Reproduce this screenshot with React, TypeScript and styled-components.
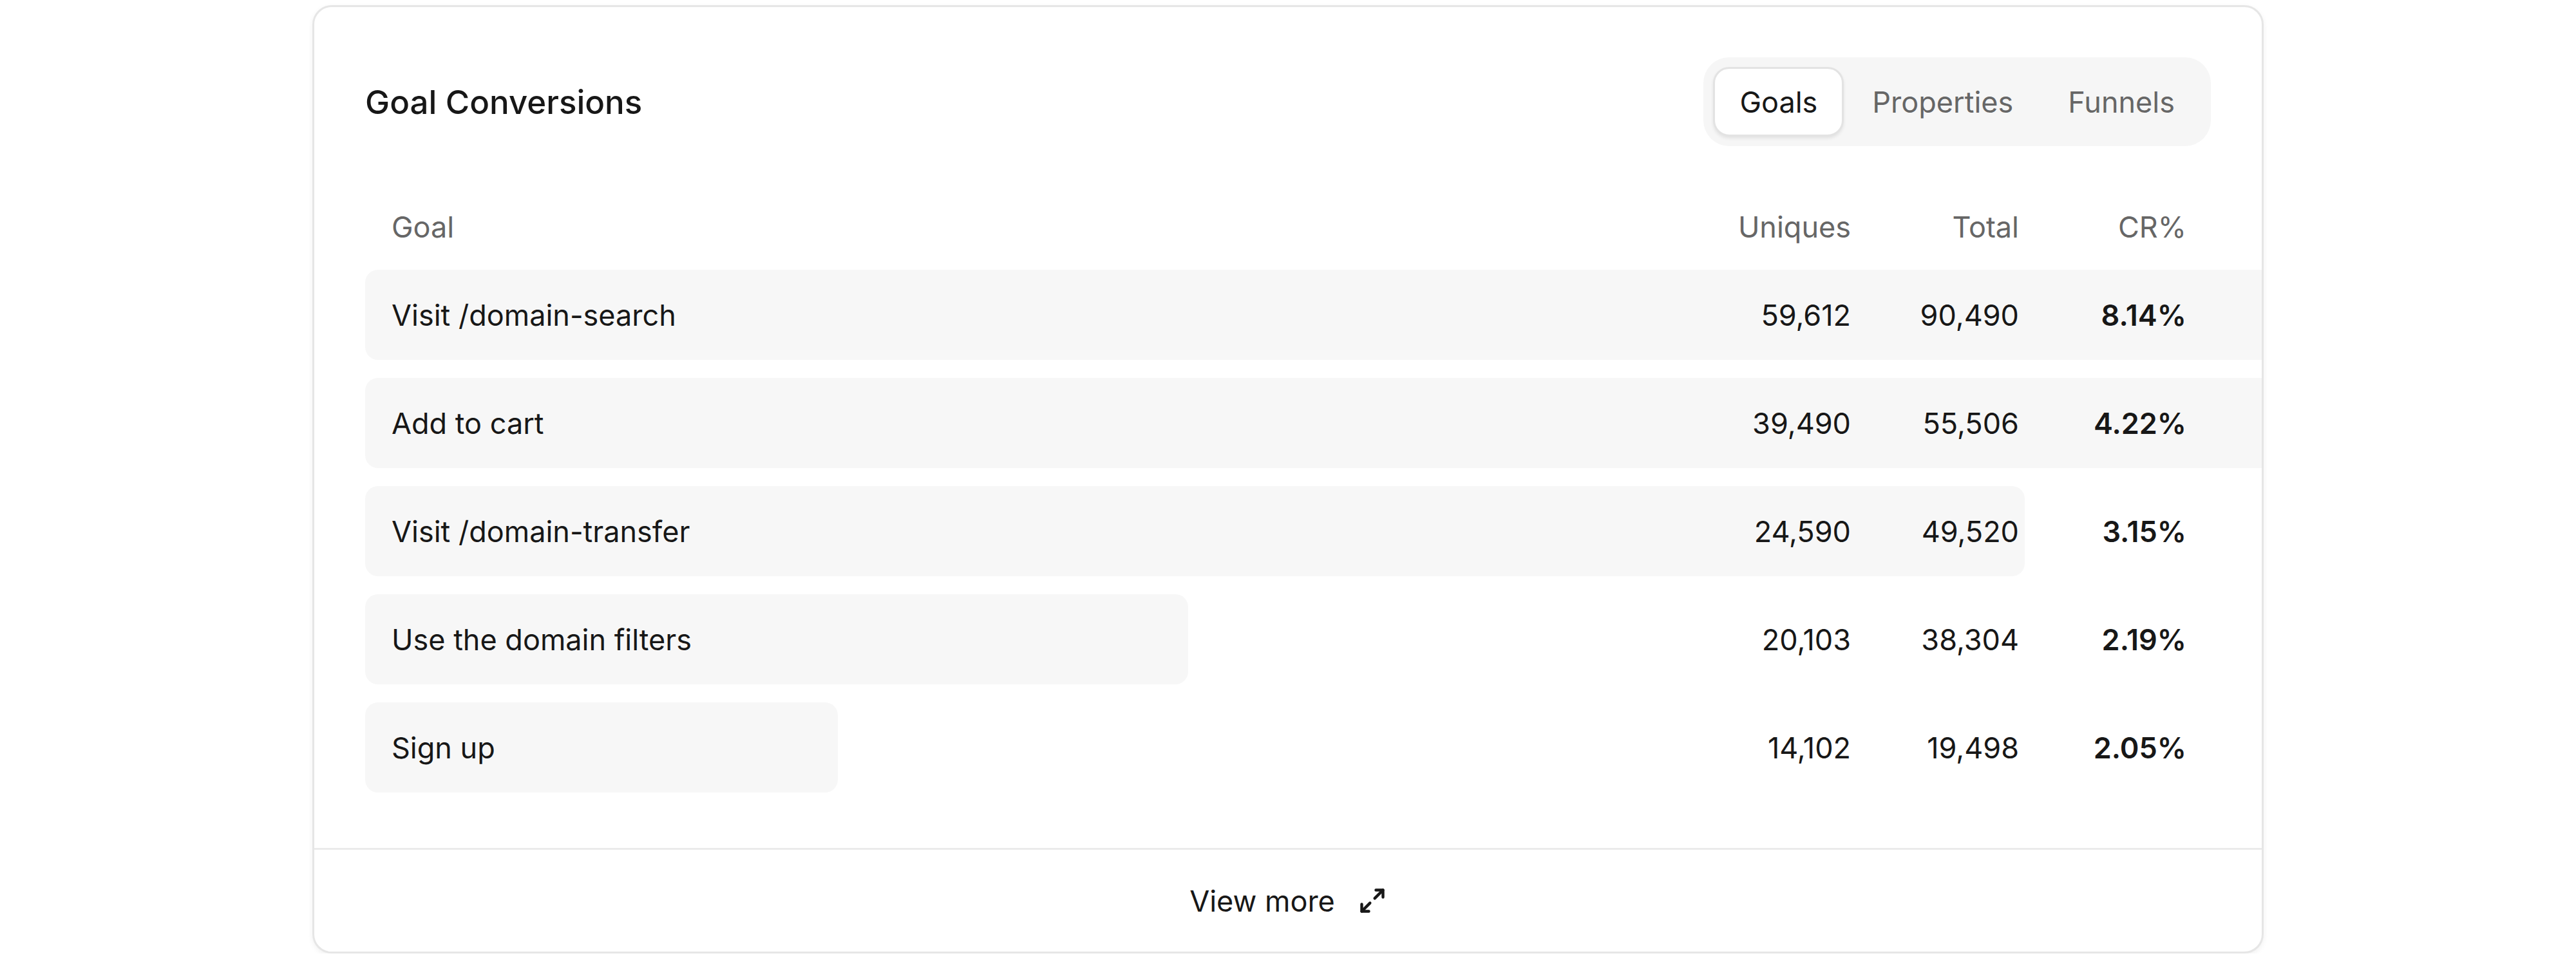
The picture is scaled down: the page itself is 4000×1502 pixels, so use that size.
import React, { FunctionComponent, useState } from 'react';
import styled, { createGlobalStyle } from 'styled-components';
import { Maximize2 } from 'lucide-react';

const goals = [
  { name: 'Visit /domain-search', uniques: '59,612', total: '90,490', cr: '8.14%', bar: 110 },
  { name: 'Add to cart', uniques: '39,490', total: '55,506', cr: '4.22%', bar: 105 },
  { name: 'Visit /domain-transfer', uniques: '24,590', total: '49,520', cr: '3.15%', bar: 89.9 },
  { name: 'Use the domain filters', uniques: '20,103', total: '38,304', cr: '2.19%', bar: 44.6 },
  { name: 'Sign up', uniques: '14,102', total: '19,498', cr: '2.05%', bar: 25.6 },
];

const tabs = ['Goals', 'Properties', 'Funnels'];

const GlobalStyle = createGlobalStyle`
  body {
    margin: 0;
    background: #ffffff;
    font-family: Inter, "Liberation Sans", sans-serif;
    color: #171717;
  }
`;

export const App: FunctionComponent<{}> = () => {
  const [tab, setTab] = useState('Goals');

  return (
    <>
      <GlobalStyle />
      <Card>
        <CardBody>
          <CardHeader>
            <Title>Goal Conversions</Title>
            <Tabs>
              {tabs.map((t) => (
                <Tab key={t} active={t === tab} onClick={(): void => setTab(t)}>
                  {t}
                </Tab>
              ))}
            </Tabs>
          </CardHeader>

          <TableHead>
            <HeadCell>Goal</HeadCell>
            <HeadCell align="right">Uniques</HeadCell>
            <HeadCell align="right">Total</HeadCell>
            <HeadCell align="right">CR%</HeadCell>
          </TableHead>

          <Rows>
            {goals.map((g) => (
              <Row key={g.name}>
                <Bar style={{ width: `${g.bar}%` }} />
                <Cell>{g.name}</Cell>
                <Cell align="right">{g.uniques}</Cell>
                <Cell align="right">{g.total}</Cell>
                <Cell align="right" strong>{g.cr}</Cell>
              </Row>
            ))}
          </Rows>
        </CardBody>

        <Footer>
          <MoreButton>
            View more
            <Maximize2 size={44} strokeWidth={2.4} />
          </MoreButton>
        </Footer>
      </Card>
    </>
  );
};

const Card = styled.div`
  width: 3030px;
  margin: 8px auto 0;
  box-sizing: border-box;
  background: #ffffff;
  border: 3px solid #e6e6e6;
  border-radius: 30px;
  box-shadow: 0 3px 8px rgba(0, 0, 0, 0.06);
  overflow: hidden;
  display: flex;
  flex-direction: column;
`;

const CardBody = styled.div`
  padding: 78px 79px 86px;
`;

const CardHeader = styled.div`
  display: flex;
  align-items: center;
  justify-content: space-between;
`;

const Title = styled.h2`
  margin: 0;
  font-size: 51px;
  font-weight: 500;
  color: #171717;
`;

const Tabs = styled.div`
  display: flex;
  gap: 3px;
  padding: 15px;
  background: #f6f6f6;
  border-radius: 40px;
`;

const Tab = styled.button<{ active?: boolean }>`
  height: 108px;
  padding: 0 38px;
  font-family: Inter, "Liberation Sans", sans-serif;
  font-size: 45px;
  font-weight: 400;
  border-radius: 25px;
  cursor: pointer;
  color: ${({ active }) => (active ? '#171717' : '#666666')};
  background: ${({ active }) => (active ? '#ffffff' : 'transparent')};
  border: 3px solid ${({ active }) => (active ? '#e3e3e3' : 'transparent')};
  box-shadow: ${({ active }) => (active ? '0 3px 5px rgba(0, 0, 0, 0.08)' : 'none')};
`;

const columns = `
  display: grid;
  grid-template-columns: 1fr 260px 261px 260px;
  align-items: center;
  padding: 0 38px 0 41px;
`;

const TableHead = styled.div`
  ${columns};
  height: 90px;
  margin: 80px 0 22px;
`;

const HeadCell = styled.div<{ align?: string }>`
  font-size: 45px;
  color: #666666;
  text-align: ${({ align }) => align || 'left'};
`;

const Rows = styled.div`
  display: flex;
  flex-direction: column;
  gap: 28px;
`;

const Row = styled.div`
  ${columns};
  position: relative;
  height: 140px;
`;

const Bar = styled.div`
  position: absolute;
  top: 0;
  bottom: 0;
  left: 0;
  background: #f7f7f7;
  border-radius: 20px;
`;

const Cell = styled.div<{ align?: string; strong?: boolean }>`
  position: relative;
  font-size: 45px;
  color: #171717;
  font-weight: ${({ strong }) => (strong ? 600 : 400)};
  text-align: ${({ align }) => align || 'left'};
`;

const Footer = styled.div`
  height: 158px;
  border-top: 3px solid #ebebeb;
  display: flex;
  align-items: center;
  justify-content: center;
`;

const MoreButton = styled.button`
  display: flex;
  align-items: center;
  gap: 36px;
  border: none;
  background: none;
  padding: 0;
  cursor: pointer;
  font-family: Inter, "Liberation Sans", sans-serif;
  font-size: 45px;
  color: #171717;
`;

export default App;
